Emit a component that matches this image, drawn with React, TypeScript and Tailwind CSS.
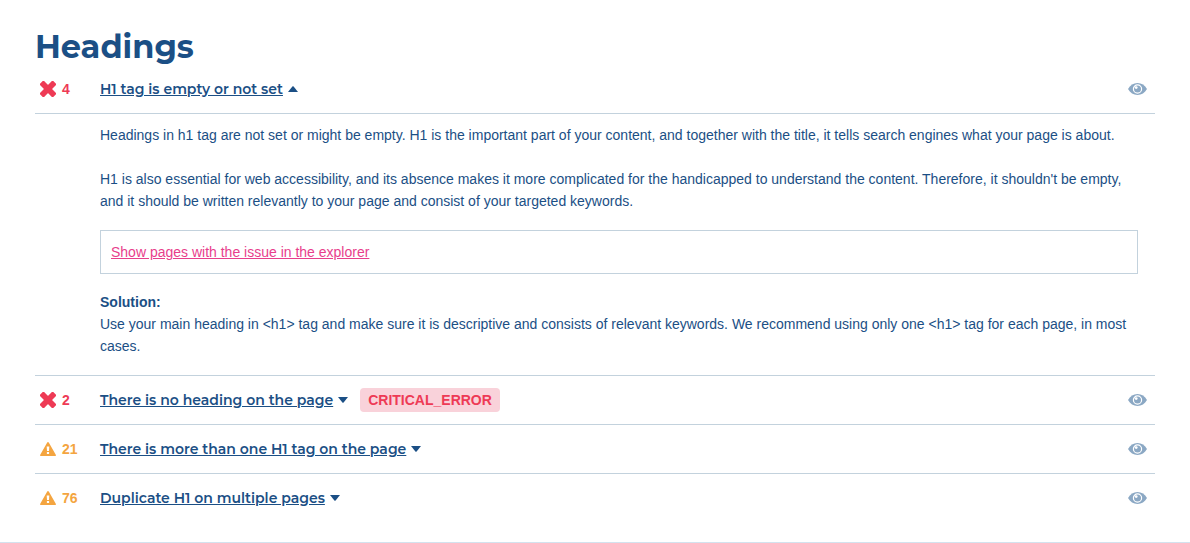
interface Issue {
    type: 'error' | 'warning'
    count: number
    title: string
    badge?: string
    open?: boolean
}

const issues: Issue[] = [
    { type: 'error', count: 4, title: 'H1 tag is empty or not set', open: true },
    { type: 'error', count: 2, title: 'There is no heading on the page', badge: 'CRITICAL_ERROR' },
    { type: 'warning', count: 21, title: 'There is more than one H1 tag on the page' },
    { type: 'warning', count: 76, title: 'Duplicate H1 on multiple pages' }
]

const CrossIcon = () => (
    <svg className="h-4 w-4" viewBox="0 0 16 16" fill="currentColor">
        <rect x="-1.4" y="5.1" width="18.8" height="5.8" rx="0.9" transform="rotate(45 8 8)" />
        <rect x="-1.4" y="5.1" width="18.8" height="5.8" rx="0.9" transform="rotate(-45 8 8)" />
    </svg>
)

const WarningIcon = () => (
    <svg className="h-4 w-4" viewBox="0 0 16 16">
        <path d="M8 2 15 14.2H1Z" fill="currentColor" stroke="currentColor" strokeWidth="1.8" strokeLinejoin="round" />
        <path d="M6.7 5.5h2.6L9 10H7zM6.9 11h2.2v2H6.9z" fill="white" />
    </svg>
)

const EyeIcon = () => (
    <svg className="h-3 w-[19px]" viewBox="0 0 19 12">
        <path d="M0 6C2.1 2.1 5.5 0 9.5 0S16.9 2.1 19 6c-2.1 3.9-5.5 6-9.5 6S2.1 9.9 0 6Z" fill="currentColor" />
        <circle cx="9.5" cy="6" r="4.1" fill="none" stroke="white" strokeWidth="1.2" />
        <circle cx="8.2" cy="4.6" r="1.4" fill="white" />
    </svg>
)

const Caret = ({ up }: { up?: boolean }) => (
    <svg className="h-[6px] w-[10px]" viewBox="0 0 10 6" fill="currentColor">
        <path d={up ? 'M0 6 4.6.3Q5 0 5.4.3L10 6Z' : 'M0 0 4.6 5.7Q5 6 5.4 5.7L10 0Z'} />
    </svg>
)

const IssueDetail = () => (
    <div className="border-t border-[#c3d2dd] pt-[10px] pr-[17px] pb-[18px] pl-[65px] text-sm leading-[22px]">
        <p>
            Headings in h1 tag are not set or might be empty. H1 is the important part of your content, and
            together with the title, it tells search engines what your page is about.
        </p>
        <p className="mt-[22px]">
            H1 is also essential for web accessibility, and its absence makes it more complicated for the
            handicapped to understand the content. Therefore, it shouldn't be empty, and it should be written
            relevantly to your page and consist of your targeted keywords.
        </p>
        <div className="mt-[18px] border border-[#c3d2dd] p-[10px]">
            <a href="#explorer" className="text-[#e83e8c] underline">Show pages with the issue in the explorer</a>
        </div>
        <h3 className="mt-[17px] font-bold">Solution:</h3>
        <p>
            Use your main heading in &lt;h1&gt; tag and make sure it is descriptive and consists of relevant
            keywords. We recommend using only one &lt;h1&gt; tag for each page, in most cases.
        </p>
    </div>
)

const IssueRow = ({ issue }: { issue: Issue }) => {
    const isError = issue.type === 'error'

    return (
        <div className="flex h-12 items-center">
            <div className={`flex w-[65px] items-center gap-[6px] pl-[5px] text-sm font-bold ${isError ? 'text-[#ee3a55]' : 'text-[#f4a540]'}`}>
                {isError ? <CrossIcon /> : <WarningIcon />}
                <span>{issue.count}</span>
            </div>
            <button
                type="button"
                aria-expanded={!!issue.open}
                className="flex items-center gap-[5px] font-['Montserrat','Inter',sans-serif] text-sm font-semibold"
            >
                <span className="underline">{issue.title}</span>
                <Caret up={issue.open} />
            </button>
            {issue.badge && (
                <span className="ml-3 rounded bg-[#f9d2da] px-2 text-sm leading-6 font-bold text-[#ee3a55]">{issue.badge}</span>
            )}
            <button type="button" aria-label="Hide issue" className="mr-2 ml-auto text-[#8ba8c4]">
                <EyeIcon />
            </button>
        </div>
    )
}

const App = () => {
    return (
        <section className="border-b border-[#d3e2ee] bg-white px-[35px] pt-7 pb-5 font-['Liberation_Sans',sans-serif] text-[#1b4f85]">
            <h2 className="font-['Montserrat','Inter',sans-serif] text-[32px] leading-[37px] font-bold">Headings</h2>
            <div className="divide-y divide-[#c3d2dd]">
                {issues.map((issue) => (
                    <div key={issue.title}>
                        <IssueRow issue={issue} />
                        {issue.open && <IssueDetail />}
                    </div>
                ))}
            </div>
        </section>
    )
}

export default App
